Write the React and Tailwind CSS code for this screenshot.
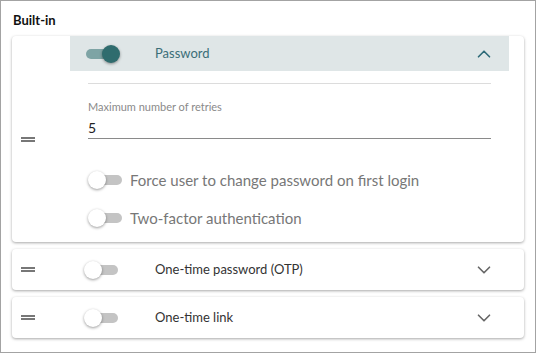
import { ChevronDown, ChevronUp } from "lucide-react";

const Toggle = ({ on }) => (
  <div className="relative w-[36px] h-[18px] shrink-0">
    <div
      className={`absolute left-[2px] right-[2px] top-[4px] h-[10px] rounded-full ${
        on ? "bg-[#7ea4a5]" : "bg-[#c4c4c4]"
      }`}
    />
    <div
      className={`absolute top-0 w-[18px] h-[18px] rounded-full shadow-[0_1px_3px_rgba(0,0,0,0.4)] ${
        on ? "left-[18px] bg-[#2f6c6e]" : "left-0 bg-white"
      }`}
    />
  </div>
);

const Handle = () => (
  <div className="w-[58px] flex shrink-0 pl-[9px]">
    <div className="w-[14px] flex flex-col gap-[1px]">
      <div className="h-[2px] bg-[#777]" />
      <div className="h-[2px] bg-[#777]" />
    </div>
  </div>
);

const Collapsed = ({ title }) => (
  <div className="bg-white rounded-[4px] shadow-[0_1px_3px_rgba(0,0,0,0.35)] h-[41px] flex items-center">
    <Handle />
    <div className="flex-1 flex items-center pl-[14px] pr-[14px]">
      <Toggle />
      <span className="ml-[35px] flex-1 text-[13px] text-[#333]">{title}</span>
      <ChevronDown size={22} strokeWidth={1.8} className="text-[#666]" />
    </div>
    <div className="w-[15px]" />
  </div>
);

const App = () => {
  return (
    <div className="w-[536px] h-[353px] border border-[#a3a3a3] bg-white font-['Lato',sans-serif] overflow-hidden">
      <h2 className="pl-[12px] pt-[10px] h-[35px] text-[13px] font-bold text-[#111]">Built-in</h2>

      <div className="mx-[11px] flex flex-col gap-[7px]">
        {/* Password card, expanded */}
        <div className="bg-white rounded-[4px] shadow-[0_1px_3px_rgba(0,0,0,0.35)] h-[206px] flex items-center">
          <Handle />
          <div className="flex-1 self-stretch flex flex-col">
            <div className="h-[35px] bg-[#dfe6e7] flex items-center pl-[14px] pr-[14px]">
              <Toggle on />
              <span className="ml-[35px] flex-1 text-[13px] text-[#3b6e78]">Password</span>
              <ChevronUp size={22} strokeWidth={1.8} className="text-[#2d6a78]" />
            </div>
            <div className="px-[18px]">
              <div className="mt-[12px] h-px bg-[#dcdcdc]" />
              <label className="block mt-[15px] text-[11px] text-[#8a8a8a]">Maximum number of retries</label>
              <div className="mt-[3px] border-b border-[#8a8a8a] pb-[1px] text-[14px] text-[#222] leading-[18px]">5</div>
              <div className="mt-[30px] flex items-center">
                <Toggle />
                <span className="ml-[6px] text-[15px] text-[#777]">Force user to change password on first login</span>
              </div>
              <div className="mt-[16px] flex items-center">
                <Toggle />
                <span className="ml-[6px] text-[15px] text-[#777]">Two-factor authentication</span>
              </div>
            </div>
          </div>
          <div className="w-[15px]" />
        </div>

        <Collapsed title="One-time password (OTP)" />
        <Collapsed title="One-time link" />
      </div>
    </div>
  );
};

export default App;
